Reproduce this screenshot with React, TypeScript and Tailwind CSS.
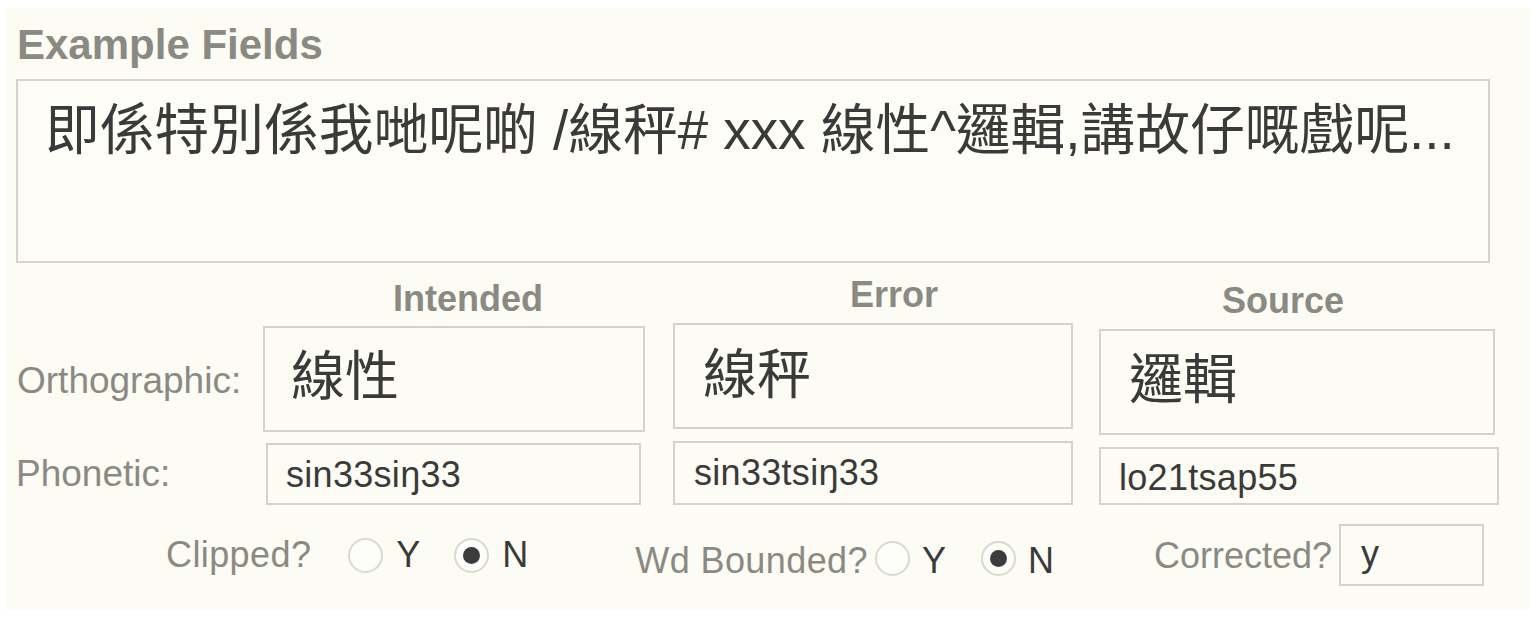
import React from "react";

function Radio({ checked }: { checked?: boolean }) {
  return (
    <span className="flex h-[35px] w-[35px] shrink-0 items-center justify-center rounded-full border-2 border-[#d9d8d1] bg-[#fdfdfa]">
      {checked ? <span className="block h-[17px] w-[17px] rounded-full bg-[#3c3c3c]" /> : null}
    </span>
  );
}

export default function App() {
  return (
    <div className="min-h-[617px] w-[1536px] bg-white pt-[8px] pl-[6px] font-[family-name:'Liberation_Sans','Noto_Sans_CJK_TC',sans-serif]">
      <div className="flex h-[602px] w-[1523px] flex-col bg-[#fcfbf4] pl-[10px] pt-[13px]">
        <div className="ml-[1px] h-[48px] text-[42px] font-bold leading-[48px] text-[#8b8a82]">
          Example Fields
        </div>

        <div className="mt-[10px] h-[184px] w-[1474px] border-2 border-[#d3d2cb] bg-[#fdfcf6] pl-[27px] pt-[17px] text-[54.75px] leading-[64px] whitespace-nowrap text-[#3a3a3a]">
          即係特別係我哋呢啲 /線秤# xxx 線性^邏輯,講故仔嘅戲呢...
        </div>

        <div className="mt-[12px] flex items-start">
          <div className="flex w-[247px] flex-col text-[37px] leading-[40px] text-[#8b8a82]">
            <div className="mt-[86px] ml-[1px]">Orthographic:</div>
            <div className="mt-[53px]">Phonetic:</div>
          </div>

          <div className="flex w-[382px] flex-col pt-[4px]">
            <div className="h-[40px] pl-[130px] text-[36px] font-bold leading-[40px] text-[#8b8a82]">Intended</div>
            <div className="mt-[7px] h-[106px] w-[382px] border-2 border-[#d3d2cb] pl-[26px] pt-[19px] text-[54px] leading-[60px] text-[#3a3a3a]">
              線性
            </div>
            <div className="mt-[11px] ml-[3px] h-[62px] w-[375px] border-2 border-[#d3d2cb] pl-[18px] pt-[10px] text-[36px] tracking-[0.3px] leading-[40px] text-[#3a3a3a]">
              sin33siŋ33
            </div>
          </div>

          <div className="ml-[28px] flex w-[400px] flex-col">
            <div className="h-[40px] pl-[177px] text-[36px] font-bold leading-[40px] text-[#8b8a82]">Error</div>
            <div className="mt-[8px] h-[106px] w-[400px] border-2 border-[#d3d2cb] pl-[28px] pt-[20px] text-[54px] leading-[60px] text-[#3a3a3a]">
              線秤
            </div>
            <div className="mt-[12px] h-[64px] w-[400px] border-2 border-[#d3d2cb] pl-[19px] pt-[10px] text-[36px] tracking-[0.3px] leading-[40px] text-[#3a3a3a]">
              sin33tsiŋ33
            </div>
          </div>

          <div className="ml-[26px] flex w-[400px] flex-col pt-[6px]">
            <div className="h-[40px] pl-[123px] text-[36px] font-bold leading-[40px] text-[#8b8a82]">Source</div>
            <div className="mt-[8px] h-[106px] w-[396px] border-2 border-[#d3d2cb] pl-[28px] pt-[19px] text-[54px] leading-[60px] text-[#3a3a3a]">
              邏輯
            </div>
            <div className="mt-[12px] h-[58px] w-[400px] border-2 border-[#d3d2cb] pl-[18px] pt-[9px] text-[36px] tracking-[0.3px] leading-[40px] text-[#3a3a3a]">
              lo21tsap55
            </div>
          </div>
        </div>

        <div className="mt-[19px] flex items-start text-[36px] leading-[40px]">
          <div className="ml-[150px] flex h-[62px] items-center">
            <span className="tracking-[0.4px] text-[#8b8a82]">Clipped?</span>
            <span className="ml-[37px]"><Radio /></span>
            <span className="ml-[13px] text-[#3a3a3a]">Y</span>
            <span className="ml-[34px]"><Radio checked /></span>
            <span className="ml-[13px] text-[#3a3a3a]">N</span>
          </div>

          <div className="ml-[107px] mt-[6px] flex h-[62px] items-center">
            <span className="tracking-[0.4px] text-[#8b8a82]">Wd Bounded?</span>
            <span className="ml-[7px] mb-[5px]"><Radio /></span>
            <span className="ml-[12px] text-[#3a3a3a]">Y</span>
            <span className="ml-[35px] mb-[5px]"><Radio checked /></span>
            <span className="ml-[12px] text-[#3a3a3a]">N</span>
          </div>

          <div className="ml-[100px] mt-[1px] flex h-[62px] items-center">
            <span className="text-[#8b8a82]">Corrected?</span>
            <div className="ml-[7px] mb-[2px] h-[62px] w-[145px] border-2 border-[#d3d2cb] pl-[20px] pt-[8px] text-[36px] leading-[40px] text-[#3a3a3a]">
              y
            </div>
          </div>
        </div>
      </div>
    </div>
  );
}
